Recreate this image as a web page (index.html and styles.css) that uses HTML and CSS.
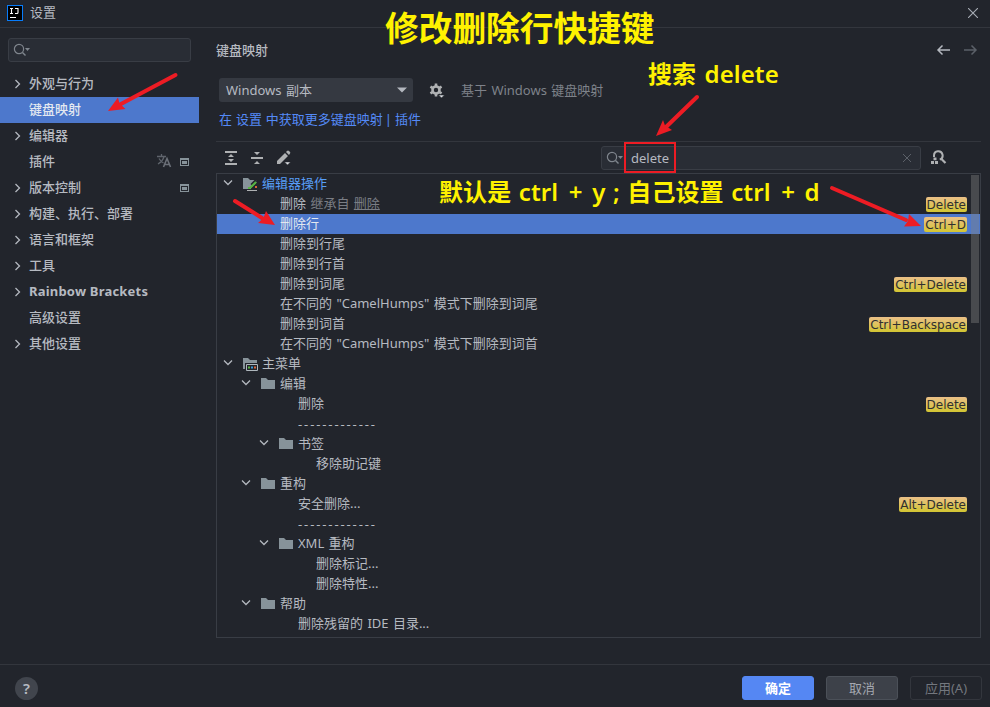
FILE: index.html
```html
<!DOCTYPE html>
<html lang="zh-CN">
<head>
<meta charset="utf-8">
<title>设置</title>
<link rel="stylesheet" href="styles.css">
</head>
<body>
<svg class="defs" width="0" height="0">
  <symbol id="right" viewBox="0 0 8 10"><path d="M1.500 1 5.500 5 1.500 9" fill="none" stroke="#b4b8bf" stroke-width="1.300"/></symbol>
  <symbol id="down" viewBox="0 0 10 8"><path d="M1 1.500 5 5.500 9 1.500" fill="none" stroke="#b4b8bf" stroke-width="1.300"/></symbol>
  <symbol id="folder" viewBox="0 0 16 14"><path d="M1 1h5l2 2h7v9H1z" fill="#87939a"/></symbol>
  <symbol id="search" viewBox="0 0 18 14"><circle cx="6" cy="6" r="4.600" fill="none" stroke="#7f858d" stroke-width="1.200"/><path d="m9.500 9.500 3 3" stroke="#7f858d" stroke-width="1.400"/><path d="M12 5h5l-2.500 3z" fill="#7f858d"/></symbol>
  <symbol id="project" viewBox="0 0 9 8"><path d="M0 0h9v8H0zM1 2v5h7V2z" fill="#87939a" fill-rule="evenodd"/><path d="M2 3h5v3H2z" fill="#87939a"/></symbol>
</svg>
<div class="window">
  <header class="titlebar">
    <svg class="logo" width="16" height="16" viewBox="0 0 16 16"><path d="M0 0h16v16H0z" fill="#087cfa"/><path d="M1 1h14v14H1z" fill="#000"/><path d="M3 3.500h3M4.500 3.500v5M3 8.500h3M8 3.500h3v4q0 1-1 1H8M3 12.500h6" fill="none" stroke="#fff" stroke-width="1.100"/></svg>
    <span class="caption">设置</span>
    <svg class="close" width="10" height="10" viewBox="0 0 10 10"><path d="m0 0 10 10M10 0 0 10" stroke="#a8adb5" stroke-width="1.100"/></svg>
  </header>
  <div class="body">
    <aside class="sidebar">
      <div class="field side-search"><svg width="18" height="14"><use href="#search"/></svg></div>
      <nav class="categories">
        <div class="cat"><svg width="8" height="10"><use href="#right"/></svg><span>外观与行为</span></div>
        <div class="cat selected leaf"><span>键盘映射</span></div>
        <div class="cat"><svg width="8" height="10"><use href="#right"/></svg><span>编辑器</span></div>
        <div class="cat leaf"><span>插件</span>
          <svg class="lang" width="15" height="14" viewBox="0 0 15 14"><path d="M0 2.500h9M4.500 0v2.500M7 2.500Q6 7 1 10M2 4.500Q4 8 6.500 9" fill="none" stroke="#5f646c" stroke-width="1.300"/><path d="m6.500 13 3.500-8.500 3.500 8.500M8 10.500h4" fill="none" stroke="#6b7078" stroke-width="1.600"/></svg>
          <svg class="proj" width="9" height="8"><use href="#project"/></svg></div>
        <div class="cat"><svg width="8" height="10"><use href="#right"/></svg><span>版本控制</span><svg class="proj" width="9" height="8"><use href="#project"/></svg></div>
        <div class="cat"><svg width="8" height="10"><use href="#right"/></svg><span>构建、执行、部署</span></div>
        <div class="cat"><svg width="8" height="10"><use href="#right"/></svg><span>语言和框架</span></div>
        <div class="cat"><svg width="8" height="10"><use href="#right"/></svg><span>工具</span></div>
        <div class="cat latin"><svg width="8" height="10"><use href="#right"/></svg><span>Rainbow Brackets</span></div>
        <div class="cat leaf"><span>高级设置</span></div>
        <div class="cat"><svg width="8" height="10"><use href="#right"/></svg><span>其他设置</span></div>
      </nav>
    </aside>
    <main class="content">
      <div class="heading"><h1>键盘映射</h1>
        <svg width="42" height="12" viewBox="0 0 42 12"><path d="M14 6H2M6.500 1.500 2 6l4.500 4.500" fill="none" stroke="#b4b8bf" stroke-width="1.500"/><path d="M28 6h12M35.500 1.500 40 6l-4.500 4.500" fill="none" stroke="#5b6068" stroke-width="1.500"/></svg>
      </div>
      <div class="scheme">
        <div class="combo"><span>Windows 副本</span><svg width="10" height="6" viewBox="0 0 10 6"><path d="M0 .5h10L5 5.500z" fill="#b4b8bf"/></svg></div>
        <svg class="gear" width="17" height="16" viewBox="0 0 17 16"><circle cx="7" cy="7" r="3.500" fill="none" stroke="#afb1b3" stroke-width="2.600"/><path d="M7 .5v3M7 10.500v3M1.400 3.700 4 5.200M10 8.800l2.600 1.500M1.400 10.300 4 8.800M10 5.200l2.600-1.500" stroke="#afb1b3" stroke-width="2.600"/><path d="M9.500 12h6l-3 3z" fill="#dfe1e5" stroke="#22252c" stroke-width=".6"/></svg>
        <span class="based">基于 Windows 键盘映射</span>
      </div>
      <div class="links"><span>在 设置 中获取更多键盘映射</span><i>|</i><span>插件</span></div>
      <div class="toolbar">
        <svg width="12" height="14" viewBox="0 0 12 14"><path d="M0 0h12v2H0zM0 12h12v2H0zM6 3l3 3H3zM6 11l3-3H3z" fill="#afb1b3"/></svg>
        <svg width="12" height="14" viewBox="0 0 12 14"><path d="M0 6h12v2H0zM3 1h6L6 4zM3 13h6l-3-3z" fill="#afb1b3"/></svg>
        <svg class="pencil" width="16" height="16" viewBox="0 0 16 16"><path d="m1 11 8-8 3 3-8 8H1zM10 2l1-1q1-1 2 0l1 1q.7.800 0 1.500L13 5z" fill="#afb1b3"/><path d="M8.500 12h6l-3 3z" fill="#dfe1e5" stroke="#22252c" stroke-width=".5"/></svg>
        <div class="field query"><svg width="18" height="14"><use href="#search"/></svg><span>delete</span><svg class="clear" width="8" height="8" viewBox="0 0 8 8"><path d="m0 0 8 8M8 0 0 8" stroke="#5b6068"/></svg></div>
        <svg class="find" width="16" height="15" viewBox="0 0 16 15"><path d="M3 7V5.500a4.300 4.300 0 1 1 5.800 4.100" fill="none" stroke="#afb1b3" stroke-width="2"/><path d="m10 8.500 4.500 4.500" stroke="#afb1b3" stroke-width="2.200"/><path d="M2.500 7.500h3v2.700h-3zM0 11h3v3H0zM4 11h3v3H4z" fill="#afb1b3"/></svg>
      </div>
      <div class="tree">
        <div class="rows">
          <div class="row l0"><svg class="chev" width="10" height="8"><use href="#down"/></svg><svg class="ico" width="16" height="14" viewBox="0 0 16 14"><path d="M1 1h5l2 2h7v2L9 11v1H1z" fill="#87939a"/><path d="m9.500 8 5-5" fill="none" stroke="#22252c" stroke-width="3"/><path d="m7.500 11.500 6.500-6.500" fill="none" stroke="#57b542" stroke-width="2"/><path d="M6 10h2v2H6z" fill="#57b542"/><path d="M13 9h2v2h-2z" fill="#d8653b"/><path d="M5 13.500h10" stroke="#afb1b3"/></svg><span class="blue">编辑器操作</span></div>
          <div class="row l2"><span>删除 <em>继承自 <u>删除</u></em></span><kbd>Delete</kbd></div>
          <div class="row l2 selected"><span>删除行</span><kbd>Ctrl+D</kbd></div>
          <div class="row l2"><span>删除到行尾</span></div>
          <div class="row l2"><span>删除到行首</span></div>
          <div class="row l2"><span>删除到词尾</span><kbd>Ctrl+Delete</kbd></div>
          <div class="row l2"><span>在不同的 "CamelHumps" 模式下删除到词尾</span></div>
          <div class="row l2"><span>删除到词首</span><kbd>Ctrl+Backspace</kbd></div>
          <div class="row l2"><span>在不同的 "CamelHumps" 模式下删除到词首</span></div>
          <div class="row l0"><svg class="chev" width="10" height="8"><use href="#down"/></svg><svg class="ico" width="16" height="14" viewBox="0 0 16 14"><path d="M1 1h5l2 2h7v3H3v6H1z" fill="#87939a"/><path d="M4.500 7.500h11v6h-11z" fill="#22252c" stroke="#afb7bd"/><path d="M6 9.500h2v2H6z" fill="#57b542"/><path d="M9 9.500h2v2H9z" fill="#3d9bd8"/><path d="M12 9.500h2v2h-2z" fill="#d8653b"/></svg><span>主菜单</span></div>
          <div class="row l1"><svg class="chev" width="10" height="8"><use href="#down"/></svg><svg class="ico" width="16" height="14"><use href="#folder"/></svg><span>编辑</span></div>
          <div class="row l3"><span>删除</span><kbd>Delete</kbd></div>
          <div class="row l3"><span class="dash">-------------</span></div>
          <div class="row l2b"><svg class="chev" width="10" height="8"><use href="#down"/></svg><svg class="ico" width="16" height="14"><use href="#folder"/></svg><span>书签</span></div>
          <div class="row l4"><span>移除助记键</span></div>
          <div class="row l1"><svg class="chev" width="10" height="8"><use href="#down"/></svg><svg class="ico" width="16" height="14"><use href="#folder"/></svg><span>重构</span></div>
          <div class="row l3"><span>安全删除...</span><kbd>Alt+Delete</kbd></div>
          <div class="row l3"><span class="dash">-------------</span></div>
          <div class="row l2b"><svg class="chev" width="10" height="8"><use href="#down"/></svg><svg class="ico" width="16" height="14"><use href="#folder"/></svg><span>XML 重构</span></div>
          <div class="row l4"><span>删除标记...</span></div>
          <div class="row l4"><span>删除特性...</span></div>
          <div class="row l1"><svg class="chev" width="10" height="8"><use href="#down"/></svg><svg class="ico" width="16" height="14"><use href="#folder"/></svg><span>帮助</span></div>
          <div class="row l3"><span>删除残留的 IDE 目录...</span></div>
        </div>
        <div class="thumb"></div>
      </div>
    </main>
  </div>
  <footer class="footer">
    <div class="help">?</div>
    <button class="primary">确定</button>
    <button>取消</button>
    <button class="disabled">应用(A)</button>
  </footer>
</div>
<div class="note n1">修改删除行快捷键</div>
<div class="note n2">搜索 delete</div>
<div class="note n3">默认是 ctrl <b>+</b> y ; 自己设置 ctrl <b>+</b> d</div>
<div class="mark"></div>
<svg class="arrows" width="990" height="707" viewBox="0 0 990 707" fill="#ed1c24" stroke="#ed1c24" stroke-linecap="round">
  <path d="M175.500 75 120 104.500" stroke-width="4"/><path stroke="none" d="m108 111 10-13.500 1.500 6L125.500 109z"/>
  <path d="M697 97 666 127" stroke-width="4"/><path stroke="none" d="m656 136 7-16 2 5.500 7 4.500z"/>
  <path d="m235 201 27 17" stroke-width="4"/><path stroke="none" d="m275 225-17-2 5.500-5L266 211z"/>
  <path d="m832 188 74 32" stroke-width="4"/><path stroke="none" d="m921 226-17 .500 4-5.500 1-7z"/>
</svg>
</body>
</html>
```
FILE: styles.css
```css
* { box-sizing: border-box; }
body { margin: 0; background: #22252c; color: #b6bac1; font: 13px/20px "Noto Sans", "Noto Sans CJK SC", sans-serif; overflow: hidden; }
svg { display: block; flex: none; }
.defs { position: absolute; }
.window { width: 990px; height: 707px; display: flex; flex-direction: column; }
.titlebar { height: 28px; flex: none; display: flex; align-items: center; padding: 0 12px 2px 7px; border-bottom: 1px solid #33363d; }
.caption { margin-left: 7px; padding-bottom: 1px; }
.close { margin-left: auto; }
.body { flex: 1; display: flex; min-height: 0; }
.sidebar { width: 199px; flex: none; padding-top: 10px; }
.field { display: flex; align-items: center; height: 24px; background: #292d35; border: 1px solid #393d45; border-radius: 3px; padding-left: 4px; }
.side-search { width: 183px; margin-left: 8px; }
.categories { margin-top: 9px; font-weight: 500; }
.cat { height: 26px; display: flex; align-items: center; padding: 0 10px 0 14px; }
.cat > span { margin-left: 7px; padding-bottom: 3px; white-space: nowrap; }
.cat > svg:first-child { margin-bottom: 1px; }
.cat.leaf { padding-left: 22px; }
.cat.latin { font-weight: 700; letter-spacing: .2px; }
.cat.selected, .row.selected { background: #4d78cc; color: #e3e8f0; }
.lang { margin-left: auto; margin-right: 8px; margin-bottom: 2px; }
.proj { margin-left: auto; margin-bottom: 1px; }
.lang + .proj { margin-left: 0; }
.content { width: 765px; margin-left: 17px; }
.heading { height: 45px; padding: 0 3px 0 0; display: flex; align-items: center; justify-content: space-between; }
.heading svg { margin-bottom: 2px; }
.heading h1 { font-size: 13px; line-height: 20px; font-weight: 500; margin: 0; padding-bottom: 1px; }
.scheme { display: flex; align-items: center; height: 24px; margin: 5px 0 0 3px; }
.combo { width: 194px; height: 24px; background: #353941; border-radius: 3px; display: flex; align-items: center; justify-content: space-between; padding: 0 6px 0 7px; word-spacing: 1px; }
.gear { margin: 2px 0 0 16px; }
.based { margin-left: 15px; color: #7e828a; word-spacing: 1px; }
.links { margin: 7px 0 0 3px; height: 32px; color: #548af7; display: flex; line-height: 20px; word-spacing: .5px; }
.links i { margin: 0 3px 0 2px; font-style: normal; }
.toolbar { height: 32px; border-top: 1px solid #33363d; display: flex; align-items: center; padding-left: 9px; gap: 14px; }
.pencil { margin-left: -1px; }
.query { width: 320px; margin-left: 295px; }
.query span { margin-left: 7px; }
.clear { margin: 0 9px 0 auto; }
.find { margin-left: -4px; }
.tree { height: 465px; border: 1px solid #393d45; position: relative; }
.row { height: 20px; display: flex; align-items: center; padding-right: 13px; white-space: pre; }
.row > span { height: 20px; line-height: 18px; word-spacing: 1px; }
.l0 { padding-left: 6px; } .l1 { padding-left: 24px; } .l2b { padding-left: 42px; }
.l2 { padding-left: 63px; } .l3 { padding-left: 81px; } .l4 { padding-left: 99px; }
.ico { margin: 0 3px 0 9px; }
.ico + span { margin-left: 1px; }
.chev { margin-bottom: 2px; }
.blue { color: #589df6; }
.row em { color: #7a7e85; font-style: normal; }
.row > .dash { letter-spacing: 1.880px; line-height: 20px; }
kbd { margin: 0 0 0 auto; height: 15px; padding: 0 1px; border-radius: 2px; background: linear-gradient(#ebc088, #d2c532); color: #303030; font: 12px/16px "DejaVu Sans", sans-serif; }
.thumb { position: absolute; right: 1px; top: 1px; width: 8px; height: 148px; background: rgba(130, 130, 130, .4); }
.footer { height: 43px; flex: none; border-top: 1px solid #33363d; display: flex; align-items: center; padding: 4px 8px 0 15px; gap: 12px; }
.help { width: 23px; height: 23px; border-radius: 50%; background: #41454d; margin-right: auto; text-align: center; font-weight: 600; font-size: 15px; line-height: 23px; }
button { width: 72px; height: 24px; padding: 0; border: 1px solid #4b5058; border-radius: 3px; background: #3d4149; color: #a4a8b0; font: inherit; line-height: 22px; }
.primary { background: #5587f3; border-color: #5587f3; color: #fff; font-weight: 700; }
.disabled { background: none; border-color: #33363d; color: #73777e; }
.note { position: absolute; color: #fff200; font-family: "Noto Sans", "Noto Sans CJK SC", sans-serif; font-weight: 700; white-space: pre; }
.n1 { left: 385px; top: 6px; font-size: 33.700px; line-height: 44px; }
.n2 { left: 648px; top: 57px; font-size: 24px; line-height: 34px; font-weight: 600; word-spacing: 2px; letter-spacing: .1px; }
.n3 { left: 439px; top: 175px; font-size: 24px; line-height: 34px; font-weight: 600; word-spacing: 1.200px; letter-spacing: .1px; }
.n3 b { font-weight: 600; margin: 0 2px 0 3px; }
.mark { position: absolute; left: 624px; top: 142px; width: 52px; height: 31px; border: 2px solid #ed1c24; }
.arrows { position: absolute; left: 0; top: 0; }
```
